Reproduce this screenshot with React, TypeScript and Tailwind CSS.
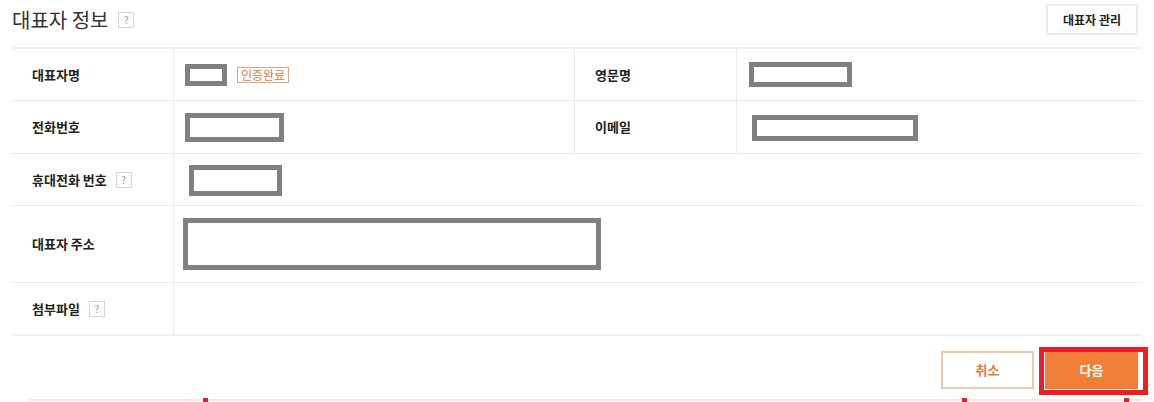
import React from "react";

const font = { fontFamily: '"Noto Sans CJK KR", "Noto Sans", sans-serif' };

function Q() {
  return (
    <span className="inline-flex h-[16px] w-[16px] items-center justify-center border border-[#d6d6d6] bg-white text-[10px] font-normal leading-none text-[#999]">
      ?
    </span>
  );
}

function Box({ w, h, className = "" }: { w: string; h: string; className?: string }) {
  return <div className={`border-[5px] border-[#808080] bg-white ${w} ${h} ${className}`} />;
}

function Label({ children }: { children: React.ReactNode }) {
  return (
    <div className="flex items-center gap-[9px] border-r border-[#ececec] pl-[20px] text-[13px] font-bold text-[#222]">
      {children}
    </div>
  );
}

export default function App() {
  return (
    <div className="relative h-[402px] w-[1154px] overflow-hidden bg-white" style={font}>
      <div className="flex items-start justify-between pl-[12px] pr-[16px] pt-[4px]">
        <div className="flex items-center gap-[10px] pt-[3px]">
          <span className="text-[20px] leading-[26px] text-[#333]">대표자 정보</span>
          <Q />
        </div>
        <button className="h-[31px] w-[92px] border-2 border-[#ececec] bg-white text-[12px] font-bold text-[#222]">
          대표자 관리
        </button>
      </div>

      <div className="mx-[12px] mt-[12px] border-t-2 border-b-2 border-[#efefef] text-[#222]">
        <div className="grid h-[52px] grid-cols-[162px_401px_162px_401px] border-b border-[#ececec]">
          <Label>대표자명</Label>
          <div className="flex items-center gap-[10px] border-r border-[#ececec] pl-[11px]">
            <Box w="w-[42px]" h="h-[22px]" />
            <span className="border border-[#e0a57a] px-[3px] text-[12px] leading-[14px] text-[#d0804a]">인증완료</span>
          </div>
          <Label>영문명</Label>
          <div className="flex items-center pl-[12px]">
            <Box w="w-[103px]" h="h-[25px]" />
          </div>
        </div>
        <div className="grid h-[53px] grid-cols-[162px_401px_162px_401px] border-b border-[#ececec]">
          <Label>전화번호</Label>
          <div className="flex items-center border-r border-[#ececec] pl-[11px]">
            <Box w="w-[99px]" h="h-[29px]" />
          </div>
          <Label>이메일</Label>
          <div className="flex items-center pl-[15px]">
            <Box w="w-[166px]" h="h-[26px]" className="mt-[2px]" />
          </div>
        </div>
        <div className="grid h-[52px] grid-cols-[162px_964px] border-b border-[#ececec]">
          <Label>
            휴대전화 번호 <Q />
          </Label>
          <div className="flex items-center pl-[15px]">
            <Box w="w-[93px]" h="h-[31px]" className="mt-[2px]" />
          </div>
        </div>
        <div className="grid h-[77px] grid-cols-[162px_964px] border-b border-[#ececec]">
          <Label>대표자 주소</Label>
          <div className="flex items-center pl-[9px]">
            <Box w="w-[418px]" h="h-[52px]" />
          </div>
        </div>
        <div className="grid h-[51px] grid-cols-[162px_964px]">
          <Label>
            첨부파일 <Q />
          </Label>
          <div />
        </div>
      </div>

      <div className="mt-[15px] flex justify-end gap-[11px] pr-[16px]">
        <button className="h-[38px] w-[93px] border-2 border-[#ebcab0] bg-white text-[13px] font-bold text-[#d9804a]">
          취소
        </button>
        <button className="h-[38px] w-[93px] bg-[#f07f38] text-[13px] font-bold text-white">다음</button>
      </div>

      <div className="absolute left-[1039px] top-[347px] h-[48px] w-[109px] border-[5px] border-[#ee1c24]" />
      <div className="absolute left-[29px] top-[399px] h-[2px] w-[1112px] bg-[#ececec]" />
      <div className="absolute left-[203px] top-[398px] h-[4px] w-[5px] bg-[#ee1c24]" />
      <div className="absolute left-[962px] top-[398px] h-[4px] w-[5px] bg-[#ee1c24]" />
      <div className="absolute left-[1124px] top-[398px] h-[4px] w-[5px] bg-[#ee1c24]" />
    </div>
  );
}
